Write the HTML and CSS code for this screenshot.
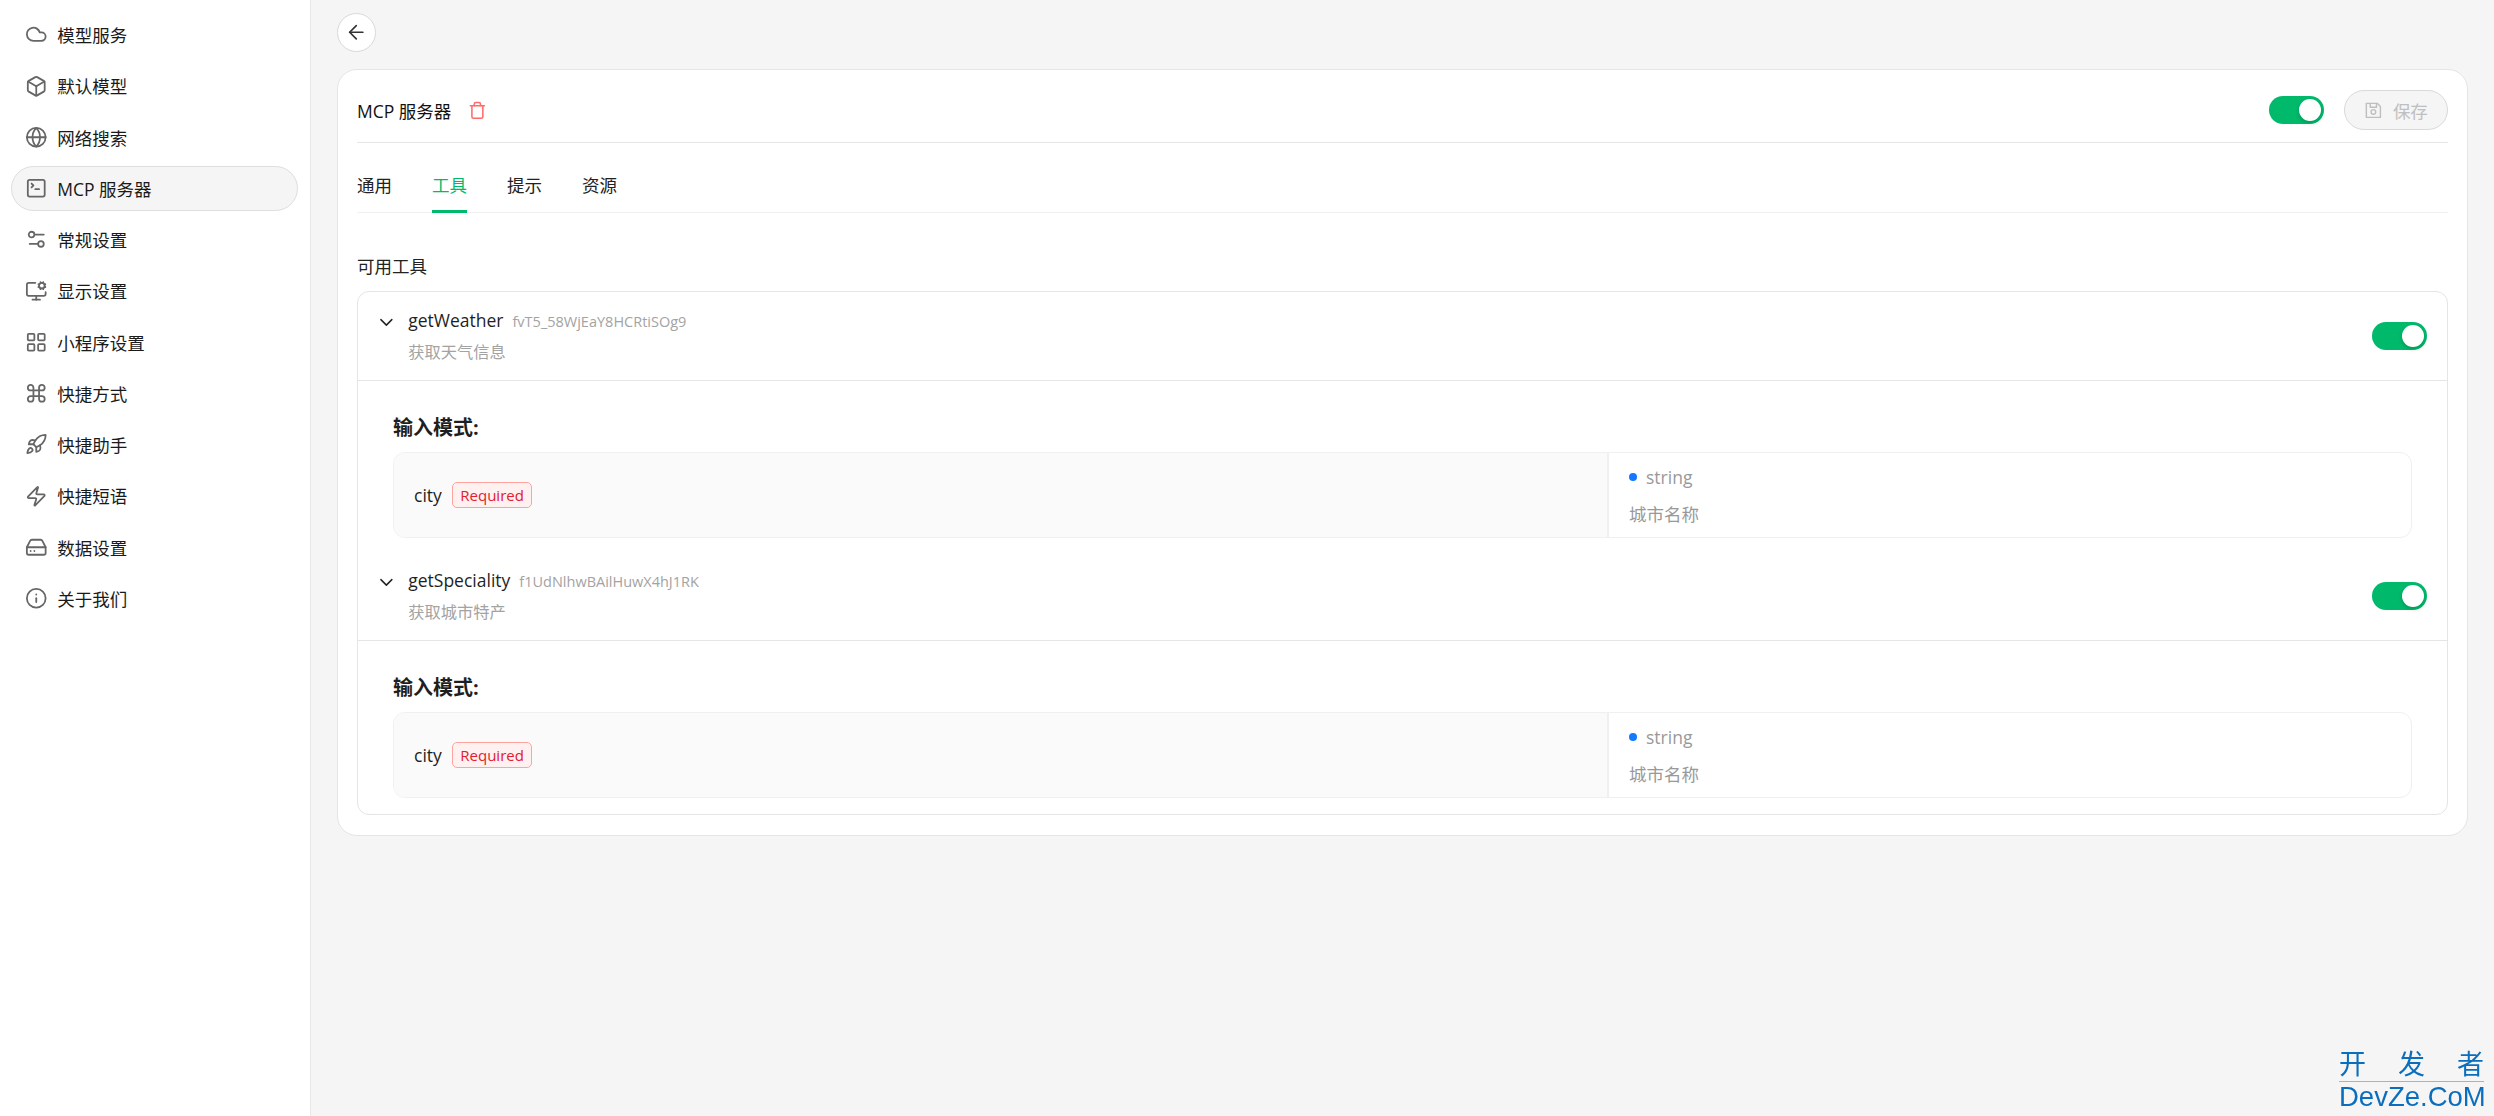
FILE: index.html
```html
<!DOCTYPE html>
<html lang="zh-CN">
<head>
<meta charset="utf-8">
<title>MCP 服务器</title>
<link rel="stylesheet" href="styles.css">
</head>
<body>
<div class="app">
  <nav class="sidebar">
    <a class="nav-item"><svg class="icon" viewBox="0 0 24 24"><path d="M17.5 19H9a7 7 0 1 1 6.71-9h1.79a4.5 4.5 0 1 1 0 9Z"/></svg><span>模型服务</span></a>
    <a class="nav-item"><svg class="icon" viewBox="0 0 24 24"><path d="M21 8a2 2 0 0 0-1-1.73l-7-4a2 2 0 0 0-2 0l-7 4A2 2 0 0 0 3 8v8a2 2 0 0 0 1 1.73l7 4a2 2 0 0 0 2 0l7-4A2 2 0 0 0 21 16Z"/><path d="m3.3 7 8.7 5 8.7-5"/><path d="M12 22V12"/></svg><span>默认模型</span></a>
    <a class="nav-item"><svg class="icon" viewBox="0 0 24 24"><circle cx="12" cy="12" r="10"/><path d="M12 2a14.5 14.5 0 0 0 0 20 14.5 14.5 0 0 0 0-20"/><path d="M2 12h20"/></svg><span>网络搜索</span></a>
    <a class="nav-item active"><svg class="icon" viewBox="0 0 24 24"><path d="m7 11 2-2-2-2"/><path d="M11 13h4"/><rect x="3" y="3" width="18" height="18" rx="2"/></svg><span>MCP 服务器</span></a>
    <a class="nav-item"><svg class="icon" viewBox="0 0 24 24"><path d="M20 7h-9"/><path d="M14 17H5"/><circle cx="17" cy="17" r="3"/><circle cx="7" cy="7" r="3"/></svg><span>常规设置</span></a>
    <a class="nav-item"><svg class="icon" viewBox="0 0 24 24"><path d="M12 17v4"/><path d="m15.2 4.9-.9-.4"/><path d="m15.2 7.1-.9.4"/><path d="m16.9 3.2-.4-.9"/><path d="m16.9 8.8-.4.9"/><path d="m19.5 2.3-.4.9"/><path d="m19.5 9.7-.4-.9"/><path d="m21.7 4.5-.9.4"/><path d="m21.7 7.5-.9-.4"/><path d="M22 13v2a2 2 0 0 1-2 2H4a2 2 0 0 1-2-2V5a2 2 0 0 1 2-2h7"/><path d="M8 21h8"/><circle cx="18" cy="6" r="3"/></svg><span>显示设置</span></a>
    <a class="nav-item"><svg class="icon" viewBox="0 0 24 24"><rect x="3" y="3" width="7" height="7" rx="1"/><rect x="14" y="3" width="7" height="7" rx="1"/><rect x="14" y="14" width="7" height="7" rx="1"/><rect x="3" y="14" width="7" height="7" rx="1"/></svg><span>小程序设置</span></a>
    <a class="nav-item"><svg class="icon" viewBox="0 0 24 24"><path d="M15 6v12a3 3 0 1 0 3-3H6a3 3 0 1 0 3 3V6a3 3 0 1 0-3 3h12a3 3 0 1 0-3-3"/></svg><span>快捷方式</span></a>
    <a class="nav-item"><svg class="icon" viewBox="0 0 24 24"><path d="M4.5 16.5c-1.5 1.26-2 5-2 5s3.74-.5 5-2c.71-.84.7-2.13-.09-2.91a2.18 2.18 0 0 0-2.91-.09z"/><path d="m12 15-3-3a22 22 0 0 1 2-3.95A12.88 12.88 0 0 1 22 2c0 2.72-.78 7.5-6 11a22.35 22.35 0 0 1-4 2z"/><path d="M9 12H4s.55-3.03 2-4c1.62-1.08 5 0 5 0"/><path d="M12 15v5s3.03-.55 4-2c1.08-1.62 0-5 0-5"/></svg><span>快捷助手</span></a>
    <a class="nav-item"><svg class="icon" viewBox="0 0 24 24"><path d="M4 14a1 1 0 0 1-.78-1.63l9.9-10.2a.5.5 0 0 1 .86.46l-1.92 6.02A1 1 0 0 0 13 10h7a1 1 0 0 1 .78 1.63l-9.9 10.2a.5.5 0 0 1-.86-.46l1.92-6.02A1 1 0 0 0 11 14z"/></svg><span>快捷短语</span></a>
    <a class="nav-item"><svg class="icon" viewBox="0 0 24 24"><path d="M22 12H2"/><path d="M5.45 5.11 2 12v6a2 2 0 0 0 2 2h16a2 2 0 0 0 2-2v-6l-3.45-6.89A2 2 0 0 0 16.76 4H7.24a2 2 0 0 0-1.79 1.11z"/><path d="M6 16h.01"/><path d="M10 16h.01"/></svg><span>数据设置</span></a>
    <a class="nav-item"><svg class="icon" viewBox="0 0 24 24"><circle cx="12" cy="12" r="10"/><path d="M12 16v-4"/><path d="M12 8h.01"/></svg><span>关于我们</span></a>
  </nav>

  <main class="main">
    <button class="back"><svg class="icon back-icon" viewBox="0 0 24 24"><path d="m12 19-7-7 7-7"/><path d="M19 12H5"/></svg></button>
    <section class="card">
      <header class="card-head">
        <div class="title-wrap">
          <span class="title">MCP 服务器</span>
          <svg class="icon trash" viewBox="0 0 24 24"><path d="M3 6h18"/><path d="M19 6v14c0 1-1 2-2 2H7c-1 0-2-1-2-2V6"/><path d="M8 6V4c0-1 1-2 2-2h4c1 0 2 1 2 2v2"/></svg>
        </div>
        <div class="head-actions">
          <span class="toggle"></span>
          <button class="save"><svg class="icon save-icon" viewBox="0 0 24 24"><path d="M4 3h13l4 4v14H3V3z"/><path d="M8 3v5h8V3"/><circle cx="12" cy="14" r="3"/></svg><span>保存</span></button>
        </div>
      </header>
      <div class="tabs">
        <span class="tab">通用</span>
        <span class="tab on">工具</span>
        <span class="tab">提示</span>
        <span class="tab">资源</span>
      </div>
      <h3 class="section">可用工具</h3>
      <div class="tools">
        <div class="tool-head">
          <svg class="icon chev" viewBox="0 0 24 24"><path d="m5 8.5 7 7 7-7"/></svg>
          <div class="tool-info">
            <div class="tool-line"><span class="tool-name">getWeather</span><span class="tool-id">fvT5_58WjEaY8HCRtiSOg9</span></div>
            <div class="tool-desc">获取天气信息</div>
          </div>
          <span class="toggle"></span>
        </div>
        <div class="tool-body">
          <div class="schema-title">输入模式:</div>
          <div class="schema">
            <div class="schema-label"><span class="param">city</span><span class="req">Required</span></div>
            <div class="schema-value">
              <div class="type"><i class="dot"></i>string</div>
              <div class="value-desc">城市名称</div>
            </div>
          </div>
        </div>
        <div class="tool-head">
          <svg class="icon chev" viewBox="0 0 24 24"><path d="m5 8.5 7 7 7-7"/></svg>
          <div class="tool-info">
            <div class="tool-line"><span class="tool-name">getSpeciality</span><span class="tool-id">f1UdNlhwBAilHuwX4hJ1RK</span></div>
            <div class="tool-desc">获取城市特产</div>
          </div>
          <span class="toggle"></span>
        </div>
        <div class="tool-body">
          <div class="schema-title">输入模式:</div>
          <div class="schema">
            <div class="schema-label"><span class="param">city</span><span class="req">Required</span></div>
            <div class="schema-value">
              <div class="type"><i class="dot"></i>string</div>
              <div class="value-desc">城市名称</div>
            </div>
          </div>
        </div>
      </div>
    </section>
  </main>
</div>
<div class="mark">
  <div class="mark-cn"><span>开</span><span>发</span><span>者</span></div>
  <div class="mark-en">DevZe.CoM</div>
</div>
</body>
</html>
```
FILE: styles.css
```css
* { box-sizing: border-box; }
html, body { margin: 0; height: 100%; }
body {
  background: #f5f5f5;
  color: #1f1f1f;
  font-family: "Open Sans", "Noto Sans CJK SC", sans-serif;
  font-size: 17.5px;
  overflow: hidden;
}
.app { display: flex; height: 1116px; }
.icon {
  fill: none;
  stroke: currentColor;
  stroke-width: 2;
  stroke-linecap: round;
  stroke-linejoin: round;
  flex: none;
}
.sidebar {
  width: 311px;
  flex: none;
  background: #fff;
  border-right: 1px solid #e8e8e8;
  padding: 12px 12px 0 11px;
  display: flex;
  flex-direction: column;
  gap: 6.25px;
}
.nav-item {
  height: 45px;
  display: flex;
  align-items: center;
  gap: 10px;
  padding: 0 12.75px;
  border: 1px solid transparent;
  border-radius: 22.5px;
  color: #1a1a1a;
}
.nav-item .icon { width: 22.5px; height: 22.5px; color: #666; stroke-width: 1.9; }
.nav-item.active { background: #f5f5f5; border-color: #dedede; }

.main { flex: 1; min-width: 0; padding: 13px 26px 0; }
.back {
  display: flex;
  align-items: center;
  justify-content: center;
  width: 39px;
  height: 39px;
  padding: 0;
  border: 1px solid #d9d9d9;
  border-radius: 50%;
  background: #fff;
  color: #333;
}
.back-icon { width: 22.5px; height: 22.5px; stroke-width: 1.8; }
.card {
  margin-top: 17px;
  height: 767px;
  background: #fff;
  border: 1px solid #e5e5e5;
  border-radius: 20px;
  padding: 0 19px;
}
.card-head {
  height: 73px;
  padding-top: 8px;
  border-bottom: 1px solid #e5e5e5;
  display: flex;
  align-items: center;
  justify-content: space-between;
}
.title-wrap { display: flex; align-items: center; gap: 17px; }
.title { color: #111; }
.trash { width: 18.75px; height: 18.75px; color: #ff6b6b; }
.head-actions { display: flex; align-items: center; gap: 20px; }
.toggle {
  display: block;
  position: relative;
  width: 55px;
  height: 28px;
  border-radius: 14px;
  background: #00b96b;
  flex: none;
}
.toggle::after {
  content: "";
  position: absolute;
  top: 3px;
  right: 3px;
  width: 22px;
  height: 22px;
  border-radius: 50%;
  background: #fff;
  box-shadow: 0 2px 4px rgba(0, 35, 11, 0.2);
}
.save {
  display: flex;
  align-items: center;
  justify-content: center;
  gap: 10px;
  width: 104px;
  height: 40px;
  padding: 0;
  border: 1px solid #d9d9d9;
  border-radius: 20px;
  background: #f5f5f5;
  color: #bfbfbf;
  font: inherit;
}
.save-icon { width: 18.75px; height: 18.75px; stroke-width: 1.8; }
.tabs {
  height: 70px;
  display: flex;
  gap: 40px;
  border-bottom: 1px solid #f0f0f0;
}
.tab {
  display: flex;
  align-items: center;
  padding-top: 16px;
  color: #222;
  border-bottom: 3px solid transparent;
  margin-bottom: -1px;
}
.tab.on { color: #00b96b; border-bottom-color: #00b96b; }
.section {
  margin: 0;
  padding-top: 41px;
  height: 78px;
  font-size: 17.5px;
  font-weight: 400;
  line-height: 24px;
  color: #222;
}
.tools {
  border: 1px solid #e5e5e5;
  border-radius: 12px;
  height: 524px;
}
.tool-head {
  height: 89px;
  padding: 0 20px 0 18.5px;
  display: flex;
  align-items: center;
  border-bottom: 1px solid #e5e5e5;
}
.chev { width: 18.75px; height: 18.75px; color: #222; margin: -28px 0 0 0; stroke-width: 1.9; }
.tool-info { flex: 1; margin-left: 13px; }
.tool-line { display: flex; align-items: baseline; gap: 9px; line-height: 24px; }
.tool-name { color: #1f1f1f; font-size: 17.5px; font-weight: 500; }
.tool-id { color: #a3a3a3; font-size: 14.5px; }
.tool-desc { color: #a3a3a3; font-size: 16.25px; line-height: 24px; margin-top: 6px; }
.tool-body { height: 171px; padding: 32px 35px 0; }
.tool-head + .tool-body + .tool-head + .tool-body { height: 172px; }
.schema-title { font-size: 20px; font-weight: 700; line-height: 30px; color: #1f1f1f; }
.schema {
  margin-top: 9px;
  height: 86px;
  display: flex;
  border: 1px solid #f0f0f0;
  border-radius: 12px;
  overflow: hidden;
}
.schema-label {
  width: 1215px;
  flex: none;
  background: #fafafa;
  border-right: 2px solid #f0f0f0;
  display: flex;
  align-items: center;
  gap: 10px;
  padding: 0 20px;
}
.param { color: #1f1f1f; font-weight: 500; }
.req {
  font-size: 15px;
  line-height: 24px;
  color: #e0202f;
  background: #fff1f0;
  border: 1px solid #ffa39e;
  border-radius: 5px;
  padding: 0 7.5px;
}
.schema-value { flex: 1; padding: 12px 20px 0; color: #999; }
.type { display: flex; align-items: center; gap: 9px; line-height: 24px; font-size: 17.5px; }
.dot { width: 8px; height: 8px; border-radius: 50%; background: #1677ff; }
.value-desc { line-height: 24px; margin-top: 13px; }
.mark {
  position: fixed;
  left: 2339px;
  top: 1050px;
  width: 145px;
  color: #0a6ebd;
  font-family: "Liberation Sans", "Noto Sans CJK SC", sans-serif;
}
.mark-cn {
  display: flex;
  justify-content: space-between;
  font-size: 27px;
  line-height: 31px;
  height: 32px;
  border-bottom: 1px solid #7cc0e8;
}
.mark-en { font-size: 27.5px; line-height: 32px; margin-top: -1px; white-space: nowrap; }
```
